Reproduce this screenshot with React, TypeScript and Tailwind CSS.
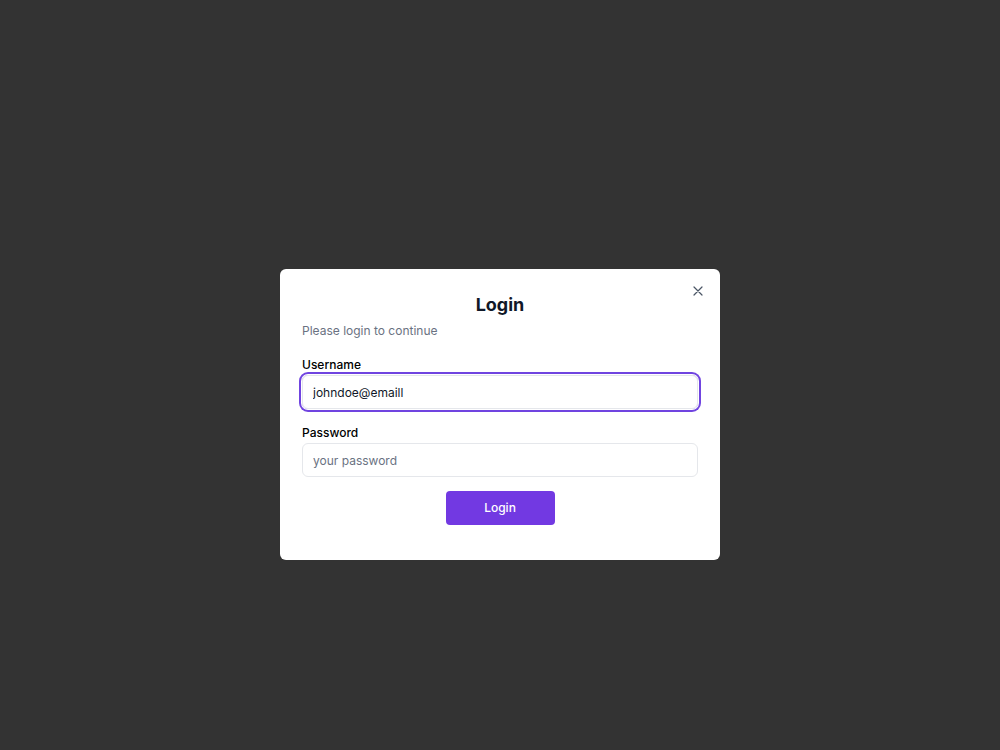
import React from "react";

export default function App() {
  return (
    <div className="w-[1000px] h-[750px] bg-[#333333] flex justify-center items-start pt-[269px] font-['Inter','Noto_Sans',sans-serif]">
      <div className="relative w-[440px] bg-white rounded-md px-[22px] pt-[22px] pb-[35px] flex flex-col">
        {/* close button */}
        <button className="absolute top-[15px] right-[15px] w-[14px] h-[14px] flex items-center justify-center text-gray-600">
          <svg width="10" height="10" viewBox="0 0 10 10" fill="none" stroke="currentColor" strokeWidth="1.2" strokeLinecap="round">
            <path d="M1 1L9 9M9 1L1 9" />
          </svg>
        </button>
        <h2 className="text-center text-[18px] leading-[28px] font-bold text-gray-900">Login</h2>
        <p className="mt-[2px] text-[12px] leading-5 text-gray-500">Please login to continue</p>

        <label className="mt-[14px] text-[12px] leading-5 font-medium text-black">Username</label>
        <input
          className="h-[34px] rounded-md border border-gray-200 px-[10px] text-[12px] text-gray-900 outline-none ring-2 ring-[#7044e0] ring-offset-1 ring-offset-white"
          defaultValue="johndoe@emaill"
        />

        <label className="mt-[14px] text-[12px] leading-5 font-medium text-black">Password</label>
        <input
          type="password"
          className="h-[34px] rounded-md border border-gray-200 px-[10px] text-[12px] text-gray-900 placeholder:text-gray-500 outline-none"
          placeholder="your password"
        />

        <div className="mt-[14px] flex justify-center">
          <button className="w-[109px] h-[34px] rounded-[4px] bg-[#7239e2] text-white text-[12px] font-medium">
            Login
          </button>
        </div>
      </div>
    </div>
  );
}
